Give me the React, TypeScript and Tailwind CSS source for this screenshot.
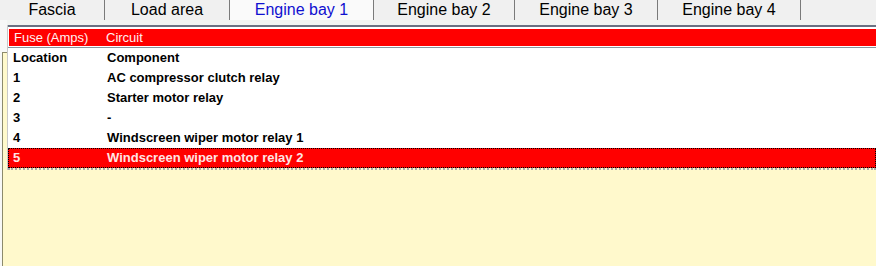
import React from 'react';

const tabs = [
  { label: 'Fascia', width: 105 },
  { label: 'Load area', width: 125 },
  { label: 'Engine bay 1', width: 144, active: true },
  { label: 'Engine bay 2', width: 141 },
  { label: 'Engine bay 3', width: 143 },
  { label: 'Engine bay 4', width: 143 },
];

const rows = [
  { loc: '1', comp: 'AC compressor clutch relay' },
  { loc: '2', comp: 'Starter motor relay' },
  { loc: '3', comp: '-' },
  { loc: '4', comp: 'Windscreen wiper motor relay 1' },
  { loc: '5', comp: 'Windscreen wiper motor relay 2', selected: true },
];

const App: React.FC = () => {
  return (
    <div
      className="w-[876px] h-[266px] overflow-hidden flex flex-col bg-[#fff9cc]"
      style={{ fontFamily: '"Liberation Sans", Arial, sans-serif' }}
    >
      {/* Tabs */}
      <div className="flex h-[20px] bg-[#f0f0f0] shrink-0">
        {tabs.map((t) => (
          <div
            key={t.label}
            style={{ width: t.width }}
            className={
              t.active
                ? 'h-full flex items-center justify-center text-[16px] leading-none text-[#1010d0] bg-[#fafafa] border-r border-[#7a7a7a]'
                : 'h-full flex items-center justify-center text-[16px] leading-none text-black border-r border-[#7a7a7a]'
            }
          >
            {t.label}
          </div>
        ))}
        <div className="flex-1" />
      </div>

      {/* Body */}
      <div className="flex flex-1">
        {/* Left edge */}
        <div className="w-[7px] flex flex-col bg-[#f7f8f7]">
          <div className="h-[32px]" />
          <div className="flex-1 ml-[2px] border-l border-t border-[#8c8a6c] bg-[#fff9cc]" />
        </div>

        {/* Main */}
        <div className="flex-1 flex flex-col">
          <div className="h-[5px] bg-[#f2f5f2]" />
          <div className="bg-white border-l border-[#c8c8c8]">
            <div className="h-[2px] bg-[#6a7282]" />
            <div className="pt-[2px] pl-[1px] pb-[1px]">
              <div className="flex h-[17px] items-center bg-[#ff0000] text-[13px] text-[#fff0f0]">
                <span className="w-[97px] pl-[5px]">Fuse (Amps)</span>
                <span>Circuit</span>
              </div>
            </div>
            <div className="h-px bg-[#8a929e]" />
            <div className="flex h-[20px] items-center text-[13px] font-bold text-black">
              <span className="w-[99px] pl-[5px]">Location</span>
              <span>Component</span>
            </div>
            {rows.map((r) =>
              r.selected ? (
                <div
                  key={r.loc}
                  className="flex h-[20px] items-center text-[13px] font-bold text-[#ffe4e4] bg-[#ff0000] border border-dotted border-black"
                >
                  <span className="w-[98px] pl-[4px]">{r.loc}</span>
                  <span>{r.comp}</span>
                </div>
              ) : (
                <div key={r.loc} className="flex h-[20px] items-center text-[13px] font-bold text-black">
                  <span className="w-[99px] pl-[5px]">{r.loc}</span>
                  <span>{r.comp}</span>
                </div>
              )
            )}
            <div className="h-[2px] border-b-2 border-dotted border-[#a8a8a8] bg-[#fff9cc]" />
          </div>
          <div className="flex-1 bg-[#fff9cc]" />
        </div>
      </div>
    </div>
  );
};

export default App;
